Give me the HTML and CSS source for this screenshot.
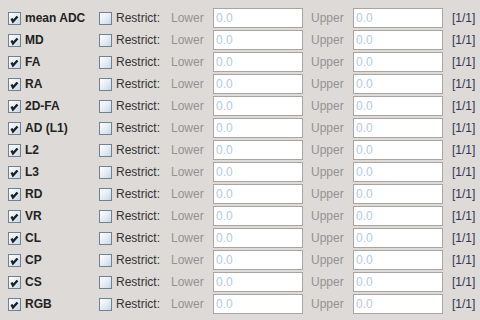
FILE: index.html
```html
<!DOCTYPE html>
<html lang="en">
<head>
    <meta charset="UTF-8">
    <title>Restrict channels</title>
    <link rel="stylesheet" href="styles.css">
</head>
<body>
<div class="panel">
    <div class="row">
        <label class="name"><span class="box checked"><svg viewBox="0 0 11 11"><path d="M2.5 5.5 L4 8.5 L8.5 3.5"/></svg></span>mean ADC</label>
        <label class="restrict"><span class="box"></span>Restrict:</label>
        <span class="bound-label">Lower</span>
        <input class="bound" type="text" value="0.0" disabled>
        <span class="bound-label upper">Upper</span>
        <input class="bound" type="text" value="0.0" disabled>
        <span class="count">[1/1]</span>
    </div>
    <div class="row">
        <label class="name"><span class="box checked"><svg viewBox="0 0 11 11"><path d="M2.5 5.5 L4 8.5 L8.5 3.5"/></svg></span>MD</label>
        <label class="restrict"><span class="box"></span>Restrict:</label>
        <span class="bound-label">Lower</span>
        <input class="bound" type="text" value="0.0" disabled>
        <span class="bound-label upper">Upper</span>
        <input class="bound" type="text" value="0.0" disabled>
        <span class="count">[1/1]</span>
    </div>
    <div class="row">
        <label class="name"><span class="box checked"><svg viewBox="0 0 11 11"><path d="M2.5 5.5 L4 8.5 L8.5 3.5"/></svg></span>FA</label>
        <label class="restrict"><span class="box"></span>Restrict:</label>
        <span class="bound-label">Lower</span>
        <input class="bound" type="text" value="0.0" disabled>
        <span class="bound-label upper">Upper</span>
        <input class="bound" type="text" value="0.0" disabled>
        <span class="count">[1/1]</span>
    </div>
    <div class="row">
        <label class="name"><span class="box checked"><svg viewBox="0 0 11 11"><path d="M2.5 5.5 L4 8.5 L8.5 3.5"/></svg></span>RA</label>
        <label class="restrict"><span class="box"></span>Restrict:</label>
        <span class="bound-label">Lower</span>
        <input class="bound" type="text" value="0.0" disabled>
        <span class="bound-label upper">Upper</span>
        <input class="bound" type="text" value="0.0" disabled>
        <span class="count">[1/1]</span>
    </div>
    <div class="row">
        <label class="name"><span class="box checked"><svg viewBox="0 0 11 11"><path d="M2.5 5.5 L4 8.5 L8.5 3.5"/></svg></span>2D-FA</label>
        <label class="restrict"><span class="box"></span>Restrict:</label>
        <span class="bound-label">Lower</span>
        <input class="bound" type="text" value="0.0" disabled>
        <span class="bound-label upper">Upper</span>
        <input class="bound" type="text" value="0.0" disabled>
        <span class="count">[1/1]</span>
    </div>
    <div class="row">
        <label class="name"><span class="box checked"><svg viewBox="0 0 11 11"><path d="M2.5 5.5 L4 8.5 L8.5 3.5"/></svg></span>AD (L1)</label>
        <label class="restrict"><span class="box"></span>Restrict:</label>
        <span class="bound-label">Lower</span>
        <input class="bound" type="text" value="0.0" disabled>
        <span class="bound-label upper">Upper</span>
        <input class="bound" type="text" value="0.0" disabled>
        <span class="count">[1/1]</span>
    </div>
    <div class="row">
        <label class="name"><span class="box checked"><svg viewBox="0 0 11 11"><path d="M2.5 5.5 L4 8.5 L8.5 3.5"/></svg></span>L2</label>
        <label class="restrict"><span class="box"></span>Restrict:</label>
        <span class="bound-label">Lower</span>
        <input class="bound" type="text" value="0.0" disabled>
        <span class="bound-label upper">Upper</span>
        <input class="bound" type="text" value="0.0" disabled>
        <span class="count">[1/1]</span>
    </div>
    <div class="row">
        <label class="name"><span class="box checked"><svg viewBox="0 0 11 11"><path d="M2.5 5.5 L4 8.5 L8.5 3.5"/></svg></span>L3</label>
        <label class="restrict"><span class="box"></span>Restrict:</label>
        <span class="bound-label">Lower</span>
        <input class="bound" type="text" value="0.0" disabled>
        <span class="bound-label upper">Upper</span>
        <input class="bound" type="text" value="0.0" disabled>
        <span class="count">[1/1]</span>
    </div>
    <div class="row">
        <label class="name"><span class="box checked"><svg viewBox="0 0 11 11"><path d="M2.5 5.5 L4 8.5 L8.5 3.5"/></svg></span>RD</label>
        <label class="restrict"><span class="box"></span>Restrict:</label>
        <span class="bound-label">Lower</span>
        <input class="bound" type="text" value="0.0" disabled>
        <span class="bound-label upper">Upper</span>
        <input class="bound" type="text" value="0.0" disabled>
        <span class="count">[1/1]</span>
    </div>
    <div class="row">
        <label class="name"><span class="box checked"><svg viewBox="0 0 11 11"><path d="M2.5 5.5 L4 8.5 L8.5 3.5"/></svg></span>VR</label>
        <label class="restrict"><span class="box"></span>Restrict:</label>
        <span class="bound-label">Lower</span>
        <input class="bound" type="text" value="0.0" disabled>
        <span class="bound-label upper">Upper</span>
        <input class="bound" type="text" value="0.0" disabled>
        <span class="count">[1/1]</span>
    </div>
    <div class="row">
        <label class="name"><span class="box checked"><svg viewBox="0 0 11 11"><path d="M2.5 5.5 L4 8.5 L8.5 3.5"/></svg></span>CL</label>
        <label class="restrict"><span class="box"></span>Restrict:</label>
        <span class="bound-label">Lower</span>
        <input class="bound" type="text" value="0.0" disabled>
        <span class="bound-label upper">Upper</span>
        <input class="bound" type="text" value="0.0" disabled>
        <span class="count">[1/1]</span>
    </div>
    <div class="row">
        <label class="name"><span class="box checked"><svg viewBox="0 0 11 11"><path d="M2.5 5.5 L4 8.5 L8.5 3.5"/></svg></span>CP</label>
        <label class="restrict"><span class="box"></span>Restrict:</label>
        <span class="bound-label">Lower</span>
        <input class="bound" type="text" value="0.0" disabled>
        <span class="bound-label upper">Upper</span>
        <input class="bound" type="text" value="0.0" disabled>
        <span class="count">[1/1]</span>
    </div>
    <div class="row">
        <label class="name"><span class="box checked"><svg viewBox="0 0 11 11"><path d="M2.5 5.5 L4 8.5 L8.5 3.5"/></svg></span>CS</label>
        <label class="restrict"><span class="box"></span>Restrict:</label>
        <span class="bound-label">Lower</span>
        <input class="bound" type="text" value="0.0" disabled>
        <span class="bound-label upper">Upper</span>
        <input class="bound" type="text" value="0.0" disabled>
        <span class="count">[1/1]</span>
    </div>
    <div class="row">
        <label class="name"><span class="box checked"><svg viewBox="0 0 11 11"><path d="M2.5 5.5 L4 8.5 L8.5 3.5"/></svg></span>RGB</label>
        <label class="restrict"><span class="box"></span>Restrict:</label>
        <span class="bound-label">Lower</span>
        <input class="bound" type="text" value="0.0" disabled>
        <span class="bound-label upper">Upper</span>
        <input class="bound" type="text" value="0.0" disabled>
        <span class="count">[1/1]</span>
    </div>
</div>
</body>
</html>
```
FILE: styles.css
```css
html, body {
    margin: 0;
    background-color: #dedad8;
}

body {
    font-family: "Liberation Sans", Arial, sans-serif;
    font-size: 12px;
    color: #333;
}

.panel {
    padding: 7px 0 0 8px;
}

.row {
    display: flex;
    align-items: center;
    height: 22px;
}

.name,
.restrict {
    display: flex;
    align-items: center;
    gap: 4px;
}

.name {
    width: 91px;
    font-weight: bold;
    color: #222;
}

.restrict {
    width: 72px;
    color: #333;
}

.box {
    width: 13px;
    height: 13px;
    box-sizing: border-box;
    border: 1px solid #6f8194;
    background: linear-gradient(135deg, #ffffff 0%, #e6edf4 50%, #c9d7e6 100%);
    display: flex;
    align-items: center;
    justify-content: center;
    flex-shrink: 0;
}

.box svg {
    width: 11px;
    height: 11px;
}

.box svg path {
    fill: none;
    stroke: #1e1e1e;
    stroke-width: 2.4;
}

.bound-label {
    width: 42px;
    color: #939393;
}

.bound-label.upper {
    width: 42px;
    padding-left: 8px;
}

.bound {
    width: 90px;
    height: 20px;
    box-sizing: border-box;
    margin: 0;
    padding: 0 0 0 2px;
    border: 1px solid #a9a5a3;
    background-color: #fff;
    color: #b3cbe3;
    font-family: "Liberation Sans", Arial, sans-serif;
    font-size: 12px;
    outline: none;
}

.count {
    padding-left: 9px;
    color: #2f3556;
}
```
